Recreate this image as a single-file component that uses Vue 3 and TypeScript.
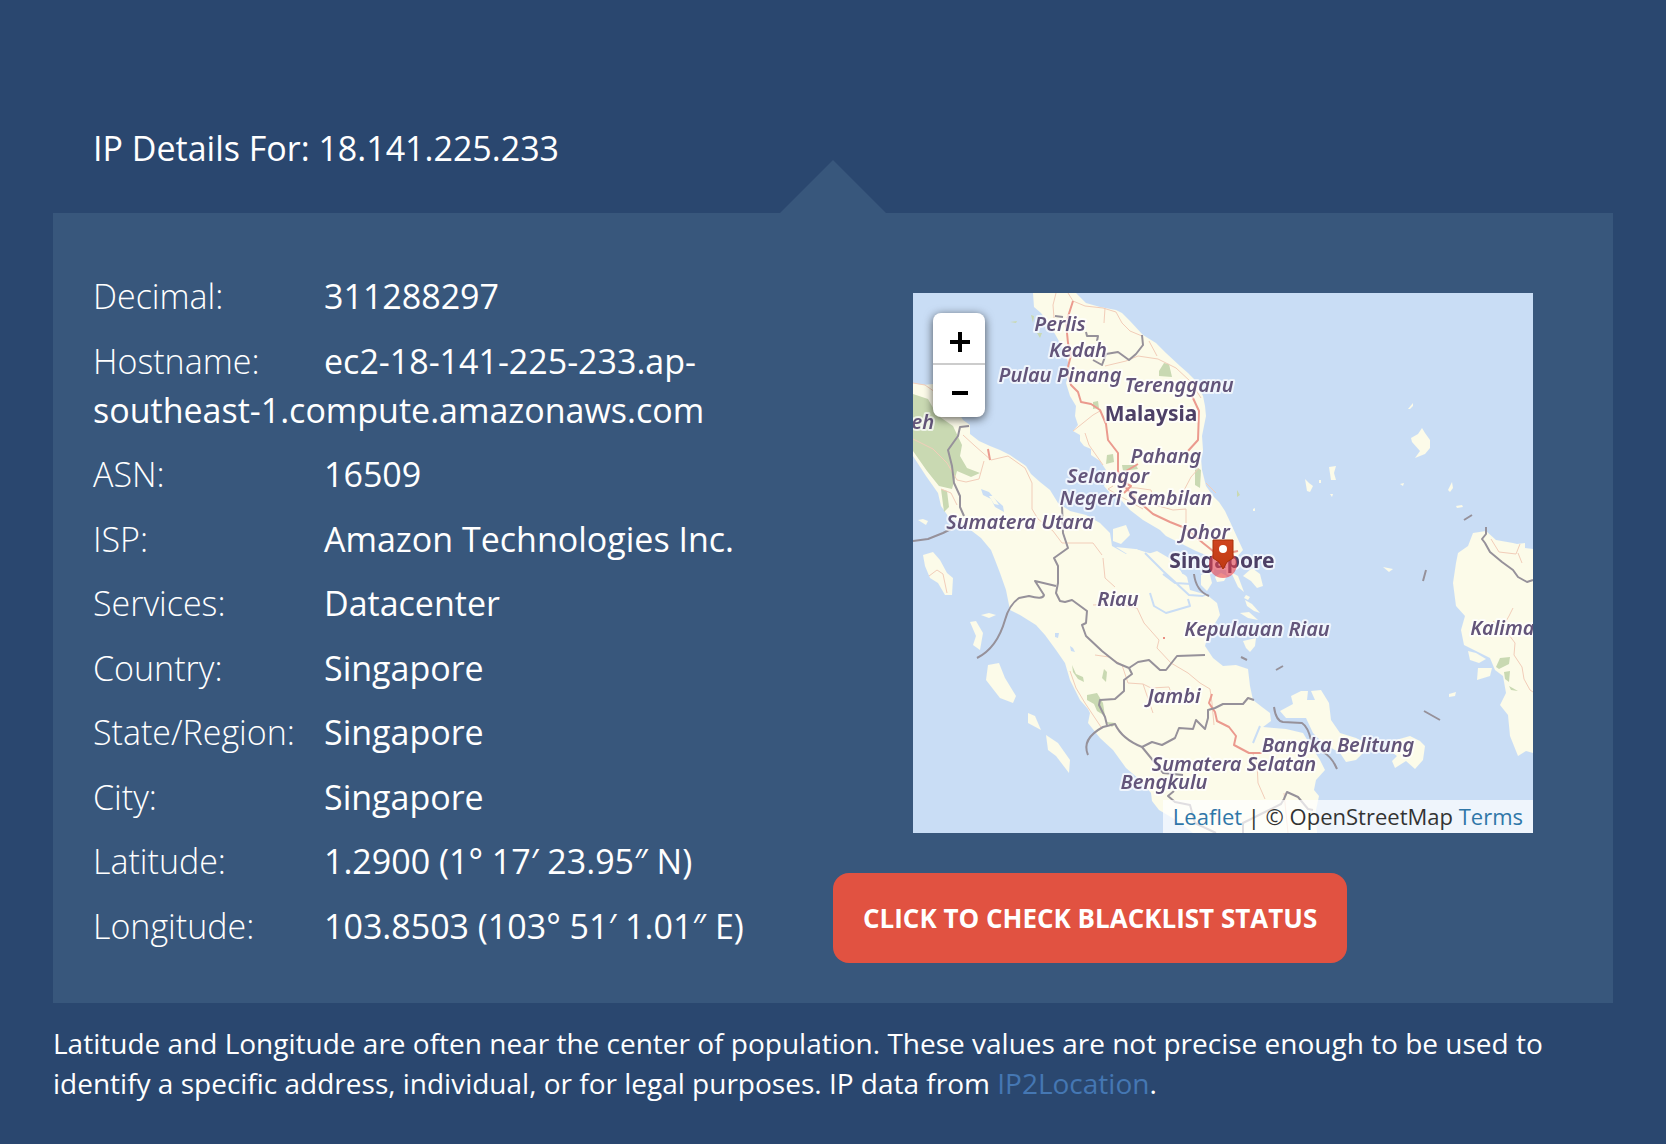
<script setup lang="ts">
interface Detail {
  label: string
  value: string
}

interface Place {
  name: string
  x: number
  y: number
  country?: boolean
}

const ip = '18.141.225.233'

const details: Detail[] = [
  { label: 'Decimal:', value: '311288297' },
  { label: 'Hostname:', value: 'ec2-18-141-225-233.ap-southeast-1.compute.amazonaws.com' },
  { label: 'ASN:', value: '16509' },
  { label: 'ISP:', value: 'Amazon Technologies Inc.' },
  { label: 'Services:', value: 'Datacenter' },
  { label: 'Country:', value: 'Singapore' },
  { label: 'State/Region:', value: 'Singapore' },
  { label: 'City:', value: 'Singapore' },
  { label: 'Latitude:', value: '1.2900 (1° 17′ 23.95″ N)' },
  { label: 'Longitude:', value: '103.8503 (103° 51′ 1.01″ E)' },
]

const places: Place[] = [
  { name: 'Perlis', x: 147, y: 38 },
  { name: 'Kedah', x: 165, y: 64 },
  { name: 'Pulau Pinang', x: 147, y: 89 },
  { name: 'Terengganu', x: 266, y: 99 },
  { name: 'Malaysia', x: 238, y: 128, country: true },
  { name: 'Pahang', x: 253, y: 170 },
  { name: 'Selangor', x: 195, y: 190 },
  { name: 'Negeri Sembilan', x: 223, y: 212 },
  { name: 'Sumatera Utara', x: 107, y: 236 },
  { name: 'Johor', x: 292, y: 246 },
  { name: 'Singapore', x: 309, y: 275, country: true },
  { name: 'Riau', x: 205, y: 313 },
  { name: 'Kepulauan Riau', x: 344, y: 343 },
  { name: 'Kalimantan Barat', x: 639, y: 342 },
  { name: 'Jambi', x: 261, y: 410 },
  { name: 'Bangka Belitung', x: 425, y: 459 },
  { name: 'Sumatera Selatan', x: 321, y: 478 },
  { name: 'Bengkulu', x: 251, y: 496 },
  { name: 'Aceh', x: -1, y: 136 },
]

const land: string[] = [
  // Malay Peninsula
  'M120 0L121 14L128 20L134 28L142 41L147 50L152 60L157 75L153 90L157 103L163 113L162 123L165 132L160 138L167 142L167 148L171 153L178 156L178 162L187 168L193 177L194 185L191 193L197 200L208 207L217 217L230 227L247 237L253 243L263 248L283 258L300 265L307 269L322 266L330 257L324 244L319 233L312 218L306 209L300 203L293 193L289 177L288 165L290 157L289 143L293 123L292 113L290 103L282 87L275 80L267 73L253 60L243 50L230 42L217 28L209 20L203 17L187 14L173 10L163 0Z',
  // Sumatra
  'M0 90L10 92L20 91L40 110L50 127L57 132L57 141L66 148L77 153L87 157L97 162L113 173L118 181L127 189L137 197L145 210L157 218L173 222L187 230L197 240L199 253L213 261L223 256L235 261L244 258L256 265L264 274L274 284L277 297L294 302L304 310L307 322L295 342L292 353L300 365L310 373L323 372L335 376L337 393L340 407L349 414L357 420L358 428L350 434L373 436L390 440L398 453L407 467L412 477L403 487L401 497L406 503L403 517L404 540L280 540L263 527L246 517L239 508L238 500L227 487L213 475L200 457L187 445L175 430L177 420L175 416L167 407L157 387L152 370L143 357L132 342L123 332L107 322L97 317L93 297L87 280L82 267L78 257L68 245L55 235L35 223L28 213L25 200L13 183L0 163Z',
  // Borneo
  'M620 256L612 255L612 250L604 251L600 250L583 247L573 238L560 240L555 253L545 260L543 270L540 290L543 313L552 323L548 337L551 352L563 358L577 365L582 377L590 383L593 400L587 412L595 422L597 443L605 463L613 458L620 460Z',
  // Bangka and Belitung
  'M367 418L380 411L378 403L388 398L395 398L394 407L402 407L398 398L408 397L416 410L418 427L427 440L443 445L453 450L450 460L443 467L433 469L427 460L410 450L400 440L393 425L373 425Z',
  'M483 447L497 443L507 448L512 453L510 467L502 476L493 468L482 475L479 468L484 463L477 458Z',
  // Islands west of Sumatra
  'M10 262L20 259L27 267L34 280L40 285L39 302L32 302L25 290L17 285L12 273Z',
  'M75 372L86 370L92 385L103 403L100 410L87 405L73 387Z',
  'M115 420L122 423L128 437L115 430Z',
  'M133 442L145 450L157 467L156 480L143 463L135 457Z',
  'M68 322L76 320L83 322L76 325Z',
  'M57 329L63 328L70 340L67 357L60 352L63 343Z',
  'M5 227L13 232L15 228L10 226Z',
  // Rupat and the Riau islands
  'M200 236L213 232L217 242L208 251L200 248Z',
  'M203 254L222 256L243 262L250 271L240 272L222 266Z',
  'M288 282L296 278L299 290L294 298L288 292Z',
  'M330 283L339 275L347 281L350 293L344 295L338 288Z',
  'M302 284L308 280L314 283L311 288L304 289Z',
  'M318 279L325 283L331 299L325 294Z',
  'M330 348L343 345L342 353L337 359L333 355Z',
  'M332 307L339 311L347 320L341 318L334 313Z',
  'M327 320L336 319L345 327L335 325Z',
  'M333 302L337 304L335 307L331 305Z',
  // Natuna and Anambas
  'M509 135L512 140L517 147L517 155L512 161L502 165L507 158L499 149L498 145L505 141Z',
  'M416 174L423 173L421 180L423 187L418 187Z',
  'M392 186L396 190L400 193L397 199L394 198Z',
  'M495 116L500 110L500 113L497 116Z',
  'M535 197L539 189L540 195L537 199Z',
  'M543 213L549 212L550 214L544 215Z',
  'M487 191L491 190L490 193Z',
  'M417 201L420 201L419 204Z',
  'M406 187L408 187L408 190L406 190Z',
  'M340 216L342 215L342 218L340 218Z',
  'M555 358L563 360L573 366L566 370L557 367Z',
  'M565 375L579 375L577 383L564 387Z',
  'M536 401L543 399L542 403L536 404Z',
  'M470 274L480 276L476 279Z',
]

const forest: string[] = [
  'M0 101L15 106L24 122L40 133L49 152L47 163L54 175L67 180L58 184L44 178L39 196L26 193L14 178L0 158Z',
  'M28 196L34 198L36 214L31 219Z',
  'M246 78L251 70L256 71L259 84L246 83Z',
  'M180 109L185 108L186 115L180 116Z',
  'M194 162L200 161L201 169L193 171Z',
  'M209 172L223 172L225 176L210 178Z',
  'M282 173L288 177L287 195L282 192Z',
  'M174 402L184 400L190 410L192 423L184 418L181 411L174 407Z',
  'M191 376L194 379L193 389L189 385Z',
  'M159 372L163 381L170 384L171 389L165 386L160 379Z',
  'M193 429L203 430L199 434Z',
  'M587 365L597 364L596 371L586 376L583 374Z',
  'M591 379L597 378L596 389L592 386Z',
  'M596 393L605 398L598 397Z',
]

const roads: string[] = [
  'M143 0L140 12L141 25M155 0L160 8L172 13L190 15L203 19L209 30L217 38L229 43',
  'M192 15L191 30',
  'M192 73L213 68L225 63L245 66L263 75L277 88L288 105M236 48L244 63',
  'M160 138L180 122L187 118M172 140L176 152L190 172',
  'M206 194L224 195L238 197L242 212L260 217L273 216L273 235M293 190L303 200',
  'M200 193L195 196L205 202L230 216M268 203L278 184L286 175',
  'M50 142L62 153L78 167L95 163L112 175L119 190L119 216L125 226L140 238L149 250L180 250L189 262',
  'M0 146L20 156L34 170L44 187L53 189L66 186L71 168M28 196L38 200L44 212',
  'M0 90L12 92L22 99',
  'M190 265L192 285L202 294',
  'M180 312L205 311L224 315L231 330L246 347L244 355L258 370L275 380L287 390L297 396L299 410L301 432',
  'M182 362L196 364L209 372L215 390L230 391L238 395L256 394L258 400M230 391L240 420',
  'M157 378L163 395L172 410L180 422L188 434',
  'M16 283L24 277L30 281L34 300',
  'M340 461L344 470L345 490L352 506M371 500L375 540',
  'M578 246L586 259L603 261L607 251M605 260L609 270M600 315L596 323L592 330M580 328L593 338L602 350L601 362L609 374L611 386L617 397L620 399',
]

const highways: string[] = [
  'M160 8L153 30L155 50L158 62L154 78L158 92L165 99L168 109L178 111L187 117L193 131L195 147L205 160L205 178L212 194L225 208L240 221L257 229L272 235L290 250L305 262L325 258',
  'M279 103L286 118L285 147L275 158M213 178L225 171',
  'M77 167L75 156',
  'M208 188L218 193L211 200',
  'M299 401L296 410L302 419L304 428L316 434L323 443L321 452L336 460L349 460',
]

const borders: string[] = [
  'M142 23L150 24M173 39L174 43L185 43L184 48M180 67L189 72L193 61L205 59L216 67L223 61L230 52L229 42',
  'M56 133L47 134L45 143L35 157L39 173L41 190L47 203L47 214L51 223M40 235L30 240L15 246L0 248',
  'M149 213L150 240L155 255L141 265L145 273L145 290L143 300L147 308L152 309L159 307L174 318L173 330L169 332L173 343L189 358L204 370L216 375L219 381L211 387L211 398L202 406L187 407L186 412L192 424L194 432',
  'M143 293L122 288L131 302Q130 307 116 303L106 305Q96 312 92 327Q84 355 64 365',
  'M216 375L225 369L236 367L247 377L253 377L264 363L292 362',
  'M175 462Q168 446 190 434L202 431Q209 446 229 454L239 449L249 452L262 445L266 435L280 436L283 427L292 436L295 425L295 417L302 415L310 411L330 411L335 405L341 407',
  'M229 454L238 465L250 480L270 482M261 498L255 503L262 509L277 512L282 530L303 540',
  'M330 540L330 530L352 519L368 511L371 506L374 499L385 504L395 516L400 517',
  'M281 281Q283 298 296 303',
  'M361 414Q363 428 370 429L389 430Q395 434 398 447M410 459Q419 464 424 476',
  'M328 364L334 367M363 377L370 373M511 418L527 427M513 277L510 288M551 227L559 222',
  'M573 234L573 241L569 246L572 250L577 259L589 269L600 277L605 284L614 289L620 287',
]

const rivers: string[] = [
  'M232 260L250 278L276 302L290 303M250 281L262 290L278 291M275 306L277 313L253 320L241 313L237 300M262 262L270 280L286 285',
  'M290 303L302 295M347 433L340 450M374 427L390 434',
]
</script>

<template>
  <main class="page">
    <h1 class="title">IP Details For: {{ ip }}</h1>

    <section class="panel">
      <dl class="details">
        <div v-for="d in details" :key="d.label" class="row">
          <dt>{{ d.label }}</dt>
          <dd>{{ d.value }}</dd>
        </div>
      </dl>

      <div class="side">
        <div class="map">
          <svg class="tiles" viewBox="0 0 620 540" role="img" aria-label="Map of Singapore and surroundings">
            <defs>
              <filter id="soft" filterUnits="userSpaceOnUse" x="0" y="0" width="620" height="540">
                <feGaussianBlur stdDeviation="0.6" />
              </filter>
              <linearGradient id="pin" x1="0" y1="0" x2="0" y2="1">
                <stop offset="0" stop-color="#cf4420" />
                <stop offset="1" stop-color="#c03a12" />
              </linearGradient>
            </defs>
            <rect width="620" height="540" fill="#c9ddf5" />
            <g filter="url(#soft)">
              <path v-for="p in land" :key="p" :d="p" class="land" />
              <path class="lake" d="M68 196L76 199L82 206L90 213L91 219L82 214L78 206L70 202Z" />
              <path class="islet" d="M76 203L80 203L86 212L81 211Z" />
              <path class="lake" d="M142 340L146 340L145 345L142 344ZM157 353L160 355L162 359L158 358Z" />
              <path v-for="p in forest" :key="p" :d="p" class="forest" />
              <path class="forest" d="M97 29L104 28L103 30ZM118 22L121 23L120 30ZM124 40L129 40L127 45ZM324 197L327 202L324 204Z" />
              <path v-for="p in rivers" :key="p" :d="p" class="river" />
              <path v-for="p in roads" :key="p" :d="p" class="road" />
              <path v-for="p in highways" :key="p" :d="p" class="highway" />
              <path v-for="p in borders" :key="p" :d="p" class="border" />
              <circle cx="251" cy="345" r="1" fill="#e56b60" />
              <text
                v-for="p in places"
                :key="p.name"
                :x="p.x"
                :y="p.y"
                :class="p.country ? 'country' : 'state'"
              >{{ p.name }}</text>
            </g>
            <circle cx="310" cy="271" r="14" fill="#e8404a" fill-opacity="0.6" />
            <path d="M300 247H320V265L314 269L310 276L306 269L300 265Z" fill="url(#pin)" stroke="#a83208" />
            <circle cx="310" cy="256" r="4" fill="#fff" />
          </svg>
          <div class="zoom">
            <button type="button" aria-label="Zoom in">
              <svg viewBox="0 0 20 20" width="20" height="20"><path d="M0 10H20M10 0V20" /></svg>
            </button>
            <button type="button" aria-label="Zoom out">
              <svg viewBox="0 0 20 20" width="20" height="20"><path d="M2 10H18" /></svg>
            </button>
          </div>
          <div class="credit"><a href="#">Leaflet</a> | © OpenStreetMap <a href="#">Terms</a></div>
        </div>
        <button type="button" class="check">CLICK TO CHECK BLACKLIST STATUS</button>
      </div>
    </section>

    <p class="note">
      Latitude and Longitude are often near the center of population. These values are not precise
      enough to be used to identify a specific address, individual, or for legal purposes. IP data
      from <a href="#">IP2Location</a>.
    </p>
  </main>
</template>

<style>
body {
  background: #2a476f;
}
</style>

<style scoped>
.page {
  box-sizing: border-box;
  padding: 124px 53px 40px;
  color: #fff;
  font-family: "Open Sans", sans-serif;
}

.title {
  margin: 0 0 40px;
  padding: 0 40px;
  font-size: 34px;
  font-weight: 400;
  line-height: 49px;
}

.panel {
  position: relative;
  display: grid;
  grid-template-columns: 1fr 1fr;
  padding: 40px 0;
  background: #38577c;
}

.panel::before {
  content: "";
  position: absolute;
  bottom: 100%;
  left: 50%;
  width: 106px;
  height: 53px;
  margin-left: -53px;
  background: #38577c;
  clip-path: polygon(50% 0, 100% 100%, 0 100%);
}

.details {
  display: flex;
  flex-direction: column;
  justify-content: space-between;
  margin: 0;
  padding: 19px 40px 12px;
  font-size: 34px;
  line-height: 49px;
}

.details dt {
  display: inline-block;
  width: 231px;
  font-weight: 300;
}

.details dd {
  display: inline;
  margin: 0;
  font-weight: 500;
}

.side {
  padding-top: 40px;
}

.map {
  position: relative;
  margin: 0 80px 40px;
}

.tiles {
  display: block;
  width: 100%;
  overflow: hidden;
}

.land,
.islet {
  fill: #fcfbe9;
}

.lake {
  fill: #c9ddf5;
}

.forest {
  fill: #c9d9b2;
}

.road,
.highway,
.border,
.river {
  fill: none;
  stroke-linejoin: round;
}

.river {
  stroke: #c9ddf5;
  stroke-width: 2;
}

.road {
  stroke: #f2cdb9;
  stroke-width: 1;
}

.highway {
  stroke: #eb9a8e;
  stroke-width: 2;
}

.border {
  stroke: #96919a;
  stroke-width: 2;
}

.state,
.country {
  paint-order: stroke;
  stroke: rgba(255, 255, 255, 0.7);
  stroke-width: 4px;
  stroke-linejoin: round;
  font-family: "Noto Sans", "Open Sans", sans-serif;
  text-anchor: middle;
}

.state {
  fill: #64557a;
  font-size: 20px;
  font-style: italic;
  font-weight: 600;
}

.country {
  fill: #4e4166;
  font-size: 21px;
  font-weight: 700;
}

.zoom {
  position: absolute;
  top: 20px;
  left: 20px;
  width: 52px;
  border-radius: 8px;
  background: #fff;
  box-shadow: 0 2px 10px rgba(0, 0, 0, 0.65);
}

.zoom button {
  display: flex;
  align-items: center;
  justify-content: center;
  width: 100%;
  height: 52px;
  padding: 4px 0 0 2px;
  border: 0;
  background: none;
}

.zoom button:first-child {
  border-bottom: 2px solid #ccc;
  padding-top: 8px;
}

.zoom svg {
  stroke: #000;
  stroke-width: 4;
}

.credit {
  position: absolute;
  right: 0;
  bottom: 0;
  padding: 0 10px;
  background: rgba(255, 255, 255, 0.7);
  color: #333;
  font-size: 22px;
  line-height: 33px;
}

.credit a {
  color: #2f77a8;
  text-decoration: none;
}

.check {
  height: 90px;
  padding: 0 30px;
  border: 0;
  border-radius: 16px;
  background: #e15241;
  color: #fff;
  font-family: inherit;
  font-size: 26px;
  font-weight: 700;
}

.note {
  margin: 20px 0 0;
  font-size: 28px;
  line-height: 40px;
}

.note a {
  color: #4577b3;
  text-decoration: none;
}
</style>
